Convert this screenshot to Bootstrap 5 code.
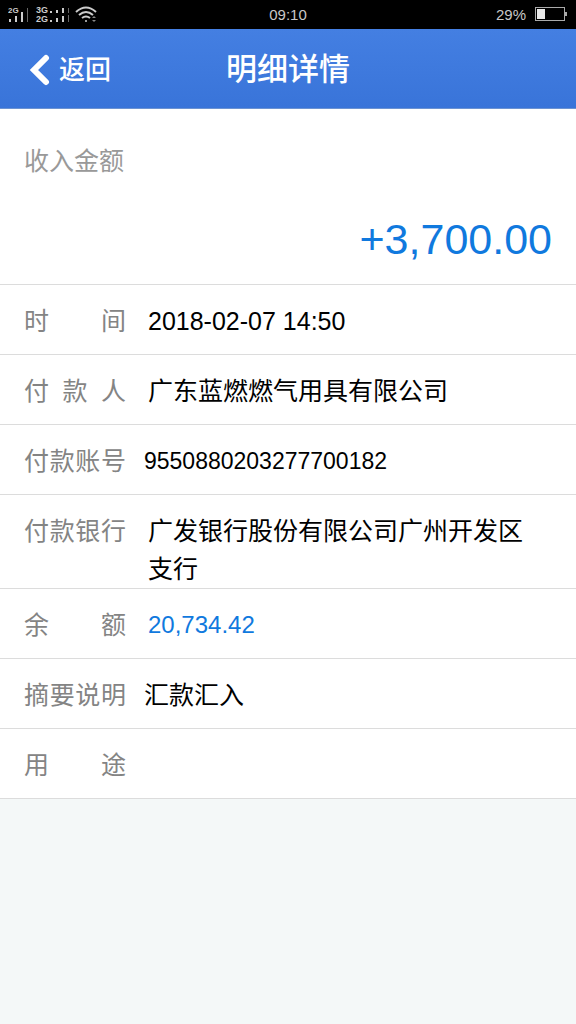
<!DOCTYPE html>
<html lang="zh-CN">
<head>
<meta charset="utf-8">
<meta name="viewport" content="width=device-width, initial-scale=1">
<title>明细详情</title>
<link href="https://cdn.jsdelivr.net/npm/bootstrap@5.3.0/dist/css/bootstrap.min.css" rel="stylesheet">
<style>
  body { background: #f4f8f8; color: #000; font-family: "Liberation Sans", "Noto Sans CJK SC", sans-serif; font-size: 25px; line-height: 38px; }
  .status-bar { background: #000; color: #c8c8c8; height: 29px; font-size: 15px; line-height: 29px; }
  .status-bar svg { display: block; }
  .title-bar { background: linear-gradient(#447fe2, #3974d9); height: 80px; padding-top: 3px; border-bottom: 1px solid #6c93d2; color: #fff; }
  .title-bar h1 { font-size: 31px; line-height: 38px; font-weight: 500; }
  .back-btn { color: #fff; font-size: 26px; line-height: 38px; font-weight: 500; margin-left: 28px; }
  .line-row { border-bottom: 1px solid #dcdcdc; }
  .amount-block { padding: 33px 24px 21px; }
  .amount-label { color: #999; }
  .amount-value { color: #1079de; font-size: 43px; line-height: 48px; padding-top: 35px; }
  .detail-row { min-height: 70px; padding: 17px 40px 0 24px; }
  .detail-label { flex: 0 0 102px; margin-right: 18px; color: #848484; font-weight: 400; text-align: justify; text-align-last: justify; }
  .account-no { font-size: 23px; }
  .balance { color: #1079de; font-size: 24px; }
</style>
</head>
<body>
<div class="status-bar row g-0 px-2">
  <div class="col d-flex align-items-center">
    <svg width="90" height="29" viewBox="0 0 90 29" fill="#ccc" role="img" aria-label="信号">
      <g font-family="Liberation Sans, sans-serif" font-weight="700">
        <text x="0" y="13" font-size="8">2G</text>
        <text x="28" y="13" font-size="9">3G</text>
        <text x="28" y="22" font-size="9">2G</text>
      </g>
      <path d="M1 19h2v3h-2zM7 16h2v6h-2zM13 12h2v10h-2z"/>
      <path d="M19 8h1v14h-1zM60 8h1v5h-1zM60 15h1v7h-1z" fill="#666"/>
      <path d="M42 11h2v2h-2zM48 10h2v3h-2zM54 8h2v5h-2zM42 20h2v2h-2zM48 18h2v4h-2zM54 16h2v6h-2z"/>
      <g fill="none" stroke="#ccc" stroke-width="2">
        <path d="M68 12q10-9 20 0M71 15q7-6 14 0M74 18q4-3 8 0"/>
      </g>
      <circle cx="78" cy="21" r="1"/>
      <path d="M84 18l2-2 2 2zM84 20l2 2 2-2z" fill="#888"/>
    </svg>
  </div>
  <div class="col-auto">09:10</div>
  <div class="col d-flex align-items-center justify-content-end gap-2">
    <span>29%</span>
    <svg width="34" height="29" viewBox="0 0 34 29" role="img" aria-label="电量">
      <path d="M1 7h30v14h-30zM2 8v12h28v-12z" fill="#aaa" fill-rule="evenodd"/>
      <path d="M3 9h8v10H3z" fill="#e8e8e8"/>
      <path d="M31 12h2v4h-2z" fill="#aaa"/>
    </svg>
  </div>
</div>

<header class="title-bar row g-0 align-items-center">
  <div class="col">
    <button type="button" class="back-btn btn p-0 border-0 d-flex align-items-center gap-2">
      <svg width="23" height="32" viewBox="0 0 23 32" fill="none" stroke="#fff" stroke-width="6" aria-hidden="true"><path d="M18 4L6 16l12 12" stroke-linecap="round"/></svg>
      <span>返回</span>
    </button>
  </div>
  <h1 class="col-auto m-0">明细详情</h1>
  <div class="col"></div>
</header>

<main class="bg-white">
  <section class="amount-block line-row">
    <div class="amount-label">收入金额</div>
    <div class="amount-value text-end">+3,700.00</div>
  </section>
  <dl class="m-0">
    <div class="detail-row line-row d-flex"><dt class="detail-label">时间</dt><dd class="m-0 ps-1">2018-02-07 14:50</dd></div>
    <div class="detail-row line-row d-flex"><dt class="detail-label">付款人</dt><dd class="m-0 ps-1">广东蓝燃燃气用具有限公司</dd></div>
    <div class="detail-row line-row d-flex"><dt class="detail-label">付款账号</dt><dd class="account-no m-0">9550880203277700182</dd></div>
    <div class="detail-row line-row d-flex"><dt class="detail-label">付款银行</dt><dd class="m-0 ps-1">广发银行股份有限公司广州开发区支行</dd></div>
    <div class="detail-row line-row d-flex"><dt class="detail-label">余额</dt><dd class="balance m-0 ps-1">20,734.42</dd></div>
    <div class="detail-row line-row d-flex"><dt class="detail-label">摘要说明</dt><dd class="m-0">汇款汇入</dd></div>
    <div class="detail-row line-row d-flex"><dt class="detail-label">用途</dt><dd class="m-0"></dd></div>
  </dl>
</main>
<script src="https://cdn.jsdelivr.net/npm/bootstrap@5.3.0/dist/js/bootstrap.bundle.min.js"></script>
</body>
</html>
